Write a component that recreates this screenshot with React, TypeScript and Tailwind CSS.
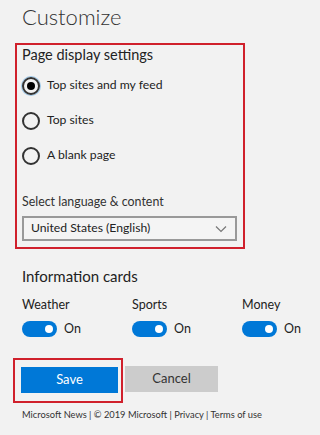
import { useState } from "react";

const font = { fontFamily: 'Lato, "Noto Sans", sans-serif' };

function Radio({ label, checked }: { label: string; checked?: boolean }) {
  return (
    <div className="flex items-center h-[35px]">
      <span
        className={
          "flex items-center justify-center w-[18px] h-[18px] rounded-full border-2 " +
          (checked ? "border-[#333] ring-1 ring-[#9cc7e8]" : "border-[#333]")
        }
      >
        {checked && <span className="w-[8px] h-[8px] rounded-full bg-black" />}
      </span>
      <span className="ml-[7px] text-[12.2px] text-[#222]">{label}</span>
    </div>
  );
}

function Toggle({ label }: { label: string }) {
  return (
    <div className="w-[110px] shrink-0">
      <div className="text-[12.5px] text-[#222] h-[20px] leading-[20px]">{label}</div>
      <div className="flex items-center mt-[5px]">
        <span className="flex items-center justify-end w-[35px] h-[16px] rounded-full bg-[#0078d7] pr-[4px]">
          <span className="w-[8px] h-[8px] rounded-full bg-white" />
        </span>
        <span className="ml-[7px] text-[12.5px] text-[#222]">On</span>
      </div>
    </div>
  );
}

export default function App() {
  const [lang] = useState("United States (English)");
  return (
    <div className="w-[320px] h-[435px] bg-[#f2f2f2] overflow-hidden" style={font}>
      <div className="pl-[22px] pt-[1px] h-[43px] text-[22px] font-light text-[#333] leading-[32px]">
        Customize
      </div>

      {/* page display */}
      <div className="ml-[15px] w-[230px] h-[206px] border-2 border-[#d0202c] pl-[5px] pr-[6px]">
        <div className="text-[14.5px] text-[#222] leading-[20px] mt-[0px]">Page display settings</div>
        <div className="mt-[3px]">
          <Radio label="Top sites and my feed" checked />
          <Radio label="Top sites" />
          <Radio label="A blank page" />
        </div>
        <div className="mt-[19px] text-[12.4px] text-[#333] leading-[20px]">Select language &amp; content</div>
        <div className="mt-[4px] flex items-center justify-between h-[25px] border-2 border-[#999] bg-[#f4f4f4] pl-[7px] pr-[8px]">
          <span className="text-[12.2px] text-[#222]">{lang}</span>
          <svg width="12" height="8" viewBox="0 0 12 8" fill="none" stroke="#777" strokeWidth="1.2">
            <path d="M1 1.5l5 5 5-5" />
          </svg>
        </div>
      </div>

      {/* information cards */}
      <div className="pl-[22px]">
        <div className="mt-[16px] text-[15px] text-[#222] leading-[22px]">Information cards</div>
        <div className="flex mt-[8px]">
          <Toggle label="Weather" />
          <Toggle label="Sports" />
          <Toggle label="Money" />
        </div>
      </div>

      <div className="flex items-center mt-[19px] ml-[13px]">
        <div className="border-2 border-[#d0202c] p-[6px] pr-[3px] pb-[8px]">
          <button className="w-[97px] h-[26px] bg-[#0078d7] text-white text-[13px]">Save</button>
        </div>
        <button className="ml-[2px] -mt-[3px] w-[93px] h-[26px] bg-[#cccccc] text-[#333] text-[13px]">Cancel</button>
      </div>

      <div className="pl-[22px] mt-[4px] text-[9.3px] text-[#333] leading-[16px]">
        Microsoft News | © 2019 Microsoft | Privacy | Terms of use
      </div>
    </div>
  );
}
